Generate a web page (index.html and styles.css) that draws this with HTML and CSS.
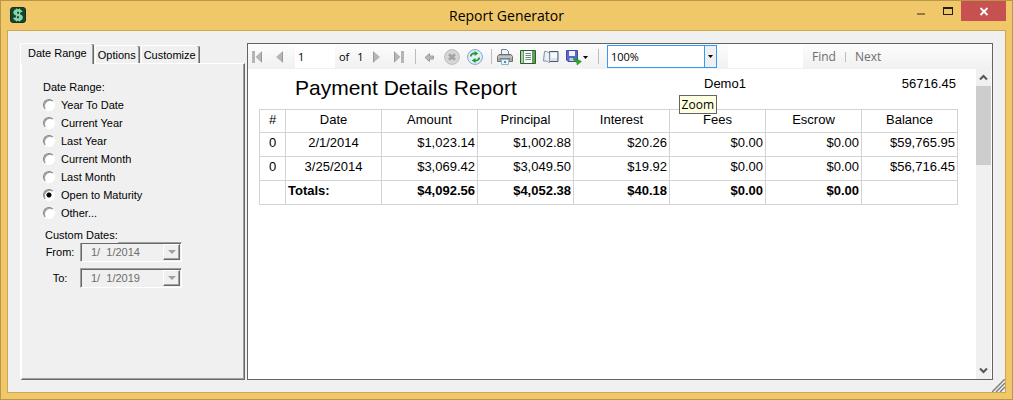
FILE: index.html
```html
<!DOCTYPE html>
<html lang="en">
  <head>
    <meta charset="utf-8" />
    <title>Report Generator</title>
    <link rel="stylesheet" href="styles.css">
  </head>
  <body>
    <div class="window">
      <header class="titlebar">
        <svg class="app-icon" width="16" height="16" viewBox="0 0 16 16">
          <rect x="0.5" y="0.5" width="15" height="15" rx="2.5" fill="#0b4a2c" stroke="#1c2b22"/>
          <path d="M11.5 5.2C10.8 3.8 9.5 3.4 8 3.4 6 3.4 4.6 4.200 4.600 5.600 4.600 8.800 11.600 7 11.600 10.300 11.600 11.800 10 12.600 8 12.600 6.200 12.600 4.800 12 4.300 10.600" fill="none" stroke="#8fd0a8" stroke-width="2.600"/>
          <path d="M6.500 1.500V14.500M9.500 1.500V14.500" stroke="#8fd0a8" stroke-width="1"/>
        </svg>
        <h1 class="title">Report Generator</h1>
        <div class="window-buttons">
          <button class="window-button" aria-label="Minimize">
            <svg width="10" height="10" viewBox="0 0 10 10"><rect x="1" y="7" width="8" height="2" fill="#937848"/></svg>
          </button>
          <button class="window-button" aria-label="Maximize">
            <svg width="10" height="10" viewBox="0 0 10 10"><path d="M0 1h10v8H0zM1 3v5h8V3z" fill="#1e1e1e" fill-rule="evenodd"/></svg>
          </button>
          <button class="window-button close" aria-label="Close">
            <svg width="10" height="10" viewBox="0 0 10 10"><path d="M1.500 2L8.500 9M8.500 2L1.500 9" stroke="#fff" stroke-width="1.800"/></svg>
          </button>
        </div>
      </header>

      <main class="client">
        <section class="options">
          <div class="tabs" role="tablist">
            <button class="tab active" role="tab" aria-selected="true">Date Range</button>
            <button class="tab" role="tab">Options</button>
            <button class="tab" role="tab">Customize</button>
          </div>
          <form class="tab-page">
            <fieldset class="ranges">
              <legend>Date Range:</legend>
              <label class="range"><input type="radio" name="range"> Year To Date</label>
              <label class="range"><input type="radio" name="range"> Current Year</label>
              <label class="range"><input type="radio" name="range"> Last Year</label>
              <label class="range"><input type="radio" name="range"> Current Month</label>
              <label class="range"><input type="radio" name="range"> Last Month</label>
              <label class="range"><input type="radio" name="range" checked> Open to Maturity</label>
              <label class="range"><input type="radio" name="range"> Other...</label>
            </fieldset>
            <fieldset class="dates">
              <legend>Custom Dates:</legend>
              <div class="date-row">
                <label for="from">From:</label>
                <div class="date-box">
                  <input type="text" id="from" value="1/  1/2014" disabled>
                  <button type="button" aria-label="Pick start date" disabled>
                    <svg width="8" height="4" viewBox="0 0 8 4"><path d="M0 0h8L4 4z" fill="#a0a0a0"/></svg>
                  </button>
                </div>
              </div>
              <div class="date-row">
                <label for="to">To:</label>
                <div class="date-box">
                  <input type="text" id="to" value="1/  1/2019" disabled>
                  <button type="button" aria-label="Pick end date" disabled>
                    <svg width="8" height="4" viewBox="0 0 8 4"><path d="M0 0h8L4 4z" fill="#a0a0a0"/></svg>
                  </button>
                </div>
              </div>
            </fieldset>
          </form>
        </section>

        <section class="viewer">
          <div class="toolbar">
            <button class="tool" aria-label="First page">
              <svg width="16" height="16" viewBox="0 0 16 16"><path d="M3 2h3v12H3zM13 2v12L6.500 8z" fill="#b5b5b5"/><path d="M12.500 3v10" stroke="#999"/></svg>
            </button>
            <button class="tool" aria-label="Previous page">
              <svg width="16" height="16" viewBox="0 0 16 16"><path d="M11 2v12L4 8z" fill="#b5b5b5"/><path d="M10.500 3v10" stroke="#999"/></svg>
            </button>
            <input type="text" class="page-number" aria-label="Current page" value="1">
            <span class="page-count"><span>of</span><span>1</span></span>
            <button class="tool" aria-label="Next page">
              <svg width="16" height="16" viewBox="0 0 16 16"><path d="M5 2v12l7-6z" fill="#b5b5b5"/><path d="M5.500 3v10" stroke="#999"/></svg>
            </button>
            <button class="tool" aria-label="Last page">
              <svg width="16" height="16" viewBox="0 0 16 16"><path d="M10 2h3v12h-3zM3 2v12l6.500-6z" fill="#b5b5b5"/><path d="M3.500 3v10" stroke="#999"/></svg>
            </button>
            <span class="separator"></span>
            <button class="tool" aria-label="Back">
              <svg width="16" height="16" viewBox="0 0 16 16"><path d="M4 8.500L8.500 4.500V7h4v3h-4v2.500z" fill="#b8b8b8" stroke="#9c9c9c"/></svg>
            </button>
            <button class="tool" aria-label="Stop">
              <svg width="16" height="16" viewBox="0 0 16 16"><circle cx="8" cy="8" r="7.400" fill="#d6d6d6" stroke="#bcbcbc"/><path d="M5 5.200l6 5.600M11 5.200l-6 5.600" stroke="#a4a4a4" stroke-width="2.800"/></svg>
            </button>
            <button class="tool" aria-label="Refresh">
              <svg width="16" height="16" viewBox="0 0 16 16"><circle cx="8" cy="8" r="7.400" fill="#e3effb" stroke="#7ba3dd"/><path d="M3.700 7.500C3.900 5.500 5.500 4.300 8 4.500M12.300 8.500c-.2 2-1.800 3.200-4.300 3" fill="none" stroke="#259a2a" stroke-width="1.700"/><path d="M7.500 2v5l3.800-2.500zM8.500 9v5l-3.800-2.500z" fill="#259a2a"/></svg>
            </button>
            <span class="separator"></span>
            <button class="tool" aria-label="Print">
              <svg width="16" height="16" viewBox="0 0 16 16"><path d="M4.500 7V.5h5l2 2V7z" fill="#eef4fa" stroke="#6d8196"/><path d="M2 5.500h12l1.500 2v5H.5v-5z" fill="#a9a9a9" stroke="#707070"/><path d="M1 8h14" stroke="#ddd"/><path d="M3 10h10" stroke="#555"/><path d="M4.500 10.500h7v5h-7z" fill="#eaf5fd" stroke="#8fb4cd"/><path d="M7 12h2v2H7z" fill="#3a94cf"/></svg>
            </button>
            <button class="tool" aria-label="Print layout">
              <svg width="16" height="16" viewBox="0 0 16 16"><path d="M.5 1.500h15v13H.5z" fill="#5c9f58" stroke="#2f5c2b"/><path d="M1 2h2v12H1z" fill="#a9d2a3"/><path d="M4 2h8v12H4z" fill="#f7fbfd"/><path d="M5.500 4.500H11M5.500 6.500H11M5.500 8.500H11M5.500 10.500H11" stroke="#738a83"/></svg>
            </button>
            <button class="tool" aria-label="Page setup">
              <svg width="16" height="16" viewBox="0 0 16 16"><path d="M6.500 2.500h8.500v10H6.500z" fill="#d9e2ee" stroke="#47566b"/><path d="M1.500 2.500h2c1.500 0 1.500 1.500 3 1.500v9.500c-1.500 0-2-1.500-3.500-1.500H.5z" fill="#eaf0f6" stroke="#7f8fa5"/><path d="M8 4h6v5H8z" fill="#f5f8fc"/></svg>
            </button>
            <button class="tool save" aria-label="Export">
              <svg width="24" height="16" viewBox="0 0 24 16"><path d="M.5 1.500h11v11H2l-1.500-1.500z" fill="#5c68c8" stroke="#3f4aa6"/><path d="M3 2h6v5H3z" fill="#eef2fb"/><path d="M3.500 9h5v3h-5z" fill="#c4cbea"/><path d="M7.500 8.500l3 3V9.800l5 2.700-4.500 3.500v-2l-3.500-3z" fill="#27ac2b" stroke="#16801b" stroke-width=".5"/><path d="M17 7h5l-2.500 3z" fill="#000"/></svg>
            </button>
            <span class="separator"></span>
            <div class="zoom">
              <select aria-label="Zoom" aria-describedby="zoom-tip">
                <option>100%</option>
              </select>
              <span class="zoom-arrow">
                <svg width="5" height="3" viewBox="0 0 5 3"><path d="M0 0h5L2.500 3z" fill="#000"/></svg>
              </span>
              <span class="tooltip" role="tooltip" id="zoom-tip">Zoom</span>
            </div>
            <input type="text" class="search" aria-label="Find text in report">
            <button class="find">Find</button>
            <span class="find-separator"></span>
            <button class="find">Next</button>
          </div>

          <div class="report-area">
            <article class="report">
              <div class="report-header">
                <h2>Payment Details Report</h2>
                <span>Demo1</span>
                <span class="loan">56716.45</span>
              </div>
              <table>
                <thead>
                  <tr><th class="number">#</th><th>Date</th><th>Amount</th><th>Principal</th><th>Interest</th><th>Fees</th><th>Escrow</th><th>Balance</th></tr>
                </thead>
                <tbody>
                  <tr><td class="center">0</td><td class="center">2/1/2014</td><td>$1,023.14</td><td>$1,002.88</td><td>$20.26</td><td>$0.00</td><td>$0.00</td><td>$59,765.95</td></tr>
                  <tr><td class="center">0</td><td class="center">3/25/2014</td><td>$3,069.42</td><td>$3,049.50</td><td>$19.92</td><td>$0.00</td><td>$0.00</td><td>$56,716.45</td></tr>
                </tbody>
                <tfoot>
                  <tr><td></td><td class="left">Totals:</td><td>$4,092.56</td><td>$4,052.38</td><td>$40.18</td><td>$0.00</td><td>$0.00</td><td></td></tr>
                </tfoot>
              </table>
            </article>
            <div class="scrollbar">
              <button aria-label="Scroll up">
                <svg width="9" height="7" viewBox="0 0 9 7"><path d="M1 5.500L4.500 2 8 5.500" fill="none" stroke="#555" stroke-width="2"/></svg>
              </button>
              <div class="track"><div class="thumb"></div></div>
              <button aria-label="Scroll down">
                <svg width="9" height="7" viewBox="0 0 9 7"><path d="M1 1.500L4.500 5 8 1.500" fill="none" stroke="#555" stroke-width="2"/></svg>
              </button>
            </div>
          </div>
        </section>

        <svg class="grip" width="13" height="13" viewBox="0 0 13 13"><path d="M0 13L13 0M4 13l9-9M8 13l5-5" stroke="#808080" stroke-width="1.500"/></svg>
      </main>
    </div>
  </body>
</html>
```

FILE: styles.css
```css
* {
  box-sizing: border-box;
}
body {
  margin: 0;
  font: 11px/14px "Liberation Sans", Arial, sans-serif;
  color: #000;
}
button, input, select {
  margin: 0;
  padding: 0;
  border: 0;
  border-radius: 0;
  background: none;
  font: inherit;
  color: inherit;
}
svg {
  display: block;
}

/* window frame */
.window {
  display: flex;
  flex-direction: column;
  min-height: 100vh;
  padding: 0 6px 6px;
  border: 1px solid #b99749;
  background: #f0c869;
}
.titlebar {
  display: grid;
  grid-template-columns: 1fr auto 1fr;
  height: 29px;
}
.app-icon {
  margin: 6px 0 0 3px;
}
.title {
  margin: 0;
  font: 14px/29px "Open Sans", sans-serif;
}
.window-buttons {
  display: flex;
  justify-content: flex-end;
  height: 20px;
}
.window-button {
  display: flex;
  justify-content: center;
  align-items: center;
  width: 27px;
}
.window-button.close {
  width: 45px;
  background: #c75050;
}
.client {
  position: relative;
  display: flex;
  flex: 1;
  gap: 2px;
  padding: 12px;
  border: 1px solid #cda650;
  background: #f0f0f0;
}
.grip {
  position: absolute;
  right: 0;
  bottom: 0;
}

/* options pane */
.options {
  display: flex;
  flex-direction: column;
  width: 225px;
}
.tabs {
  display: flex;
  align-items: flex-end;
  height: 20px;
}
.tab {
  height: 18px;
  padding: 0 4px 0 2px;
  border: solid #fff;
  border-width: 1px 0 0 1px;
  border-radius: 2px 2px 0 0;
  box-shadow: inset -1px 0 #696969, inset -2px 0 #a0a0a0;
}
.tab + .tab {
  margin-left: 1px;
}
.tab.active {
  z-index: 1;
  height: 21px;
  margin-bottom: -1px;
  padding: 0 7px 3px;
  background: #f0f0f0;
}
.tab-page {
  flex: 1;
  padding: 16px 0 0 21px;
  border: solid #fff;
  border-width: 1px 1px 1px 2px;
  border-right-color: #696969;
  border-bottom-color: #696969;
  box-shadow: inset -1px -1px #a0a0a0;
}
fieldset {
  margin: 0;
  padding: 0;
  border: 0;
}
legend {
  padding: 0;
}
.ranges legend {
  margin-bottom: 2px;
}
.range {
  display: flex;
  align-items: center;
  gap: 6px;
  height: 18px;
}
.range input {
  appearance: none;
  width: 12px;
  height: 12px;
  border: 1px solid #a0a0a0;
  border-color: #808080 #fff #fff #808080;
  border-radius: 50%;
  background: #fff;
  box-shadow: inset 1px 1px #a0a0a0;
}
.range input:checked {
  background: radial-gradient(circle, #000 2px, #fff 3px);
}
.dates {
  margin: 6px 0 0 2px;
}
.dates legend {
  position: relative;
  height: 15px;
  margin-bottom: -1px;
  background: #f0f0f0;
}
.date-row {
  display: flex;
  align-items: center;
  gap: 5px;
  margin-bottom: 6px;
}
.date-row label {
  width: 30px;
  text-align: center;
}
.date-box {
  display: flex;
  width: 102px;
  height: 20px;
  border: 1px solid #a0a0a0;
  border-right-color: #fff;
  border-bottom-color: #fff;
  box-shadow: inset 1px 1px #696969;
  padding: 1px;
}
.date-box input {
  flex: 1;
  min-width: 0;
  padding-left: 9px;
  color: #6d6d6d;
  white-space: pre;
}
.date-box button {
  display: flex;
  justify-content: center;
  align-items: center;
  width: 17px;
  border: 1px solid #fff;
  border-right-color: #696969;
  border-bottom-color: #696969;
  box-shadow: inset -1px -1px #a0a0a0;
}

/* report viewer */
.viewer {
  display: flex;
  flex: 1;
  flex-direction: column;
  min-width: 0;
  border: 1px solid #646464;
  background: #fff;
}
.toolbar {
  display: flex;
  align-items: center;
  height: 25px;
  padding-left: 1px;
  background: linear-gradient(#fdfdfd, #f0f0f0);
  font: 12px/16px "Open Sans", sans-serif;
}
.tool {
  width: 16px;
  margin-right: 7px;
}
.tool.save {
  width: 24px;
}
.separator {
  width: 1px;
  height: 15px;
  margin: 0 5px 0 1px;
  background: #bdbdbd;
}
.page-number {
  width: 40px;
  height: 23px;
  margin-right: 4px;
  padding-left: 3px;
  background: #fff;
  font-size: 11px;
}
.page-count {
  display: flex;
  gap: 8px;
  width: 29px;
  font-size: 11px;
}
.zoom {
  position: relative;
  display: flex;
  width: 110px;
  height: 23px;
  margin-left: 3px;
  border: 1px solid #3399ff;
  background: #fff;
}
.zoom select {
  flex: 1;
  appearance: none;
  padding-left: 3px;
  font-size: 11px;
}
.zoom-arrow {
  display: flex;
  justify-content: center;
  align-items: center;
  width: 12px;
  border-left: 1px solid #3399ff;
  background: #f0f0f0;
  pointer-events: none;
}
.tooltip {
  position: absolute;
  top: 49px;
  right: -1px;
  z-index: 1;
  padding: 0 2px;
  border: 1px solid #646464;
  background: #ffffe1;
  line-height: 17px;
}
.search {
  width: 75px;
  height: 23px;
  margin: 0 9px 0 11px;
  background: #fff;
}
.find {
  color: #6d6d6d;
}
.find-separator {
  width: 1px;
  height: 10px;
  margin: 0 9px;
  background: #bdbdbd;
}
.report-area {
  display: flex;
  flex: 1;
}
.report {
  flex: 1;
  padding: 5px 18px 0 11px;
  font-size: 13px;
  line-height: 16px;
}
.report-header {
  display: grid;
  grid-template-columns: 409px 1fr auto;
  height: 35px;
  padding: 0 2px 0 36px;
  line-height: 20px;
}
.report-header h2 {
  margin: 0;
  font-size: 21px;
  font-weight: normal;
  line-height: 28px;
}
table {
  width: 100%;
  table-layout: fixed;
  border-collapse: collapse;
}
th, td {
  height: 24px;
  padding: 2px 2px 5px;
  border: 1px solid #d3d3d3;
  text-align: right;
}
th {
  height: 23px;
  padding-bottom: 4px;
  font-weight: normal;
  text-align: center;
}
.number {
  width: 26px;
}
.center {
  text-align: center;
}
.left {
  text-align: left;
}
tfoot {
  font-weight: bold;
}
.scrollbar {
  display: flex;
  flex-direction: column;
  width: 15px;
  margin-right: 1px;
  background: #f0f0f0;
}
.scrollbar button {
  display: flex;
  justify-content: center;
  align-items: center;
  height: 17px;
}
.track {
  flex: 1;
}
.thumb {
  height: 79px;
  background: #cdcdcd;
}
```
